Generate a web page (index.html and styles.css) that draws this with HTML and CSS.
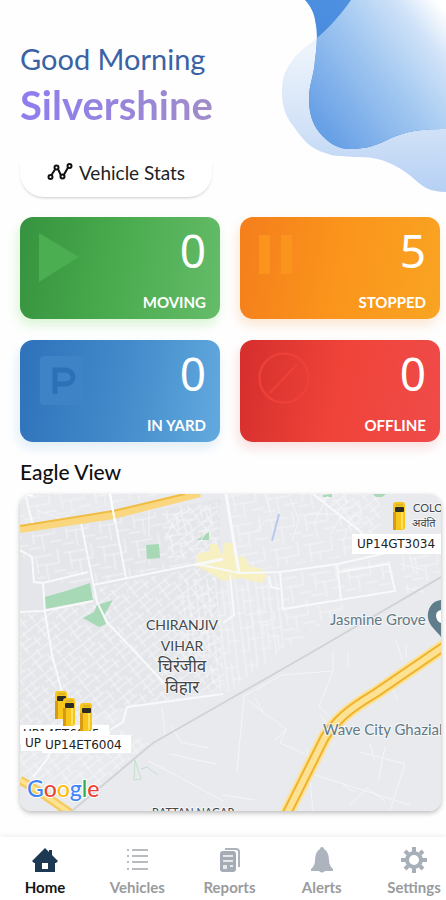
FILE: index.html
```html
<!DOCTYPE html>
<html lang="en">
<head>
<meta charset="utf-8">
<meta name="viewport" content="width=device-width, initial-scale=1">
<title>Fleet Home</title>
<link rel="stylesheet" href="styles.css">
</head>
<body>
<div class="app">
  <header class="hero">
    <svg class="hero-art" viewBox="0 0 164 194" aria-hidden="true">
      <defs>
        <linearGradient id="deep" x1="0" y1="1" x2="1" y2="0"><stop offset="0" stop-color="#3f86dd"/><stop offset="1" stop-color="#5795e2"/></linearGradient>
        <linearGradient id="pale" x1="0" y1="0" x2="0" y2="1"><stop offset=".25" stop-color="#edf4fc"/><stop offset=".7" stop-color="#cfe0f7"/><stop offset="1" stop-color="#b5d0f4"/></linearGradient>
        <linearGradient id="mix" gradientUnits="userSpaceOnUse" x1="38" y1="125" x2="172" y2="22"><stop offset="0" stop-color="#68a0e6"/><stop offset=".5" stop-color="#a4c9f1"/><stop offset=".8" stop-color="#cfe2f8"/><stop offset="1" stop-color="#fff"/></linearGradient>
        <clipPath id="palePath"><path d="M69 0C59 14 49 26 35 38C27 45 19 49 13 57C4 68-1 76-1 91C-1 106 3 116 12 127C21 140 29 149 43 153C53 157 62 156 73 157C87 157 97 158 107 163C117 167 124 172 131 178C141 187 148 192 164 192V0Z"/></clipPath>
      </defs>
      <path fill="url(#pale)" d="M69 0C59 14 49 26 35 38C27 45 19 49 13 57C4 68 0 76 0 91C0 106 3 116 12 127C21 140 29 149 43 153C53 157 62 156 73 157C87 157 97 158 107 163C117 167 124 172 131 178C141 187 148 192 164 192V0Z"/>
      <path fill="url(#deep)" d="M23 0C29 7 32 13 33 20C36 34 35 46 33 60C32 76 27 84 27 99C27 112 30 123 37 132C46 143 56 149 68 149C81 149 89 147 101 142C121 132 134 129 164 129V0Z"/>
      <path fill="url(#mix)" clip-path="url(#palePath)" d="M23 0C29 7 32 13 33 20C36 34 35 46 33 60C32 76 27 84 27 99C27 112 30 123 37 132C46 143 56 149 68 149C81 149 89 147 101 142C121 132 134 129 164 129V0Z"/>
    </svg>
    <p class="greeting">Good Morning</p>
    <h1 class="name">Silvershine</h1>
  </header>

  <main class="content">
    <button class="pill" type="button">
      <svg class="pill-icon" viewBox="0 0 26 18" aria-hidden="true"><g fill="none" stroke="#111" stroke-width="2"><path d="M4.500 12L8 6.500M11 6L14 12.500M16.500 12.500L21 4.500"/><circle cx="3.500" cy="14" r="2"/><circle cx="9.500" cy="4.500" r="2"/><circle cx="15.500" cy="13.500" r="2"/><circle cx="22.500" cy="3" r="2"/></g></svg>
      Vehicle Stats
    </button>

    <section class="stats" aria-label="Vehicle Stats">
      <a class="card moving" href="#moving">
        <svg class="card-icon" viewBox="0 0 52 52" aria-hidden="true"><path fill="#4bae50" d="M1 1L41 25L1 50Z"/></svg>
        <span class="count">0</span><span class="label">MOVING</span>
      </a>
      <a class="card stopped" href="#stopped">
        <svg class="card-icon" viewBox="0 0 52 52" aria-hidden="true"><path fill="#fa941d" d="M1 3H12V42H1ZM23 3H34V42H23Z"/></svg>
        <span class="count">5</span><span class="label">STOPPED</span>
      </a>
      <a class="card yard" href="#yard">
        <svg class="card-icon" viewBox="0 0 52 52" aria-hidden="true"><rect x="2" y="1" width="43" height="49" rx="4" fill="#3d83c6"/><path fill="none" stroke="#2d70b6" stroke-width="5" d="M17 39V15H26C38 15 38 29 26 29H17"/></svg>
        <span class="count">0</span><span class="label">IN YARD</span>
      </a>
      <a class="card offline" href="#offline">
        <svg class="card-icon" viewBox="0 0 52 52" aria-hidden="true"><g fill="none" stroke="#ec4039" stroke-width="2.500"><circle cx="26" cy="23" r="24.500"/><path d="M12 38L39 9"/></g></svg>
        <span class="count">0</span><span class="label">OFFLINE</span>
      </a>
    </section>

    <h2 class="section-title">Eagle View</h2>
    <section class="map-card" aria-label="Eagle View">
      <svg class="map" viewBox="0 0 421 317" preserveAspectRatio="xMidYMid slice" role="img" aria-label="Map of vehicle positions">
        <defs>
          <pattern id="blocks" width="34" height="30" patternUnits="userSpaceOnUse" patternTransform="rotate(-9)"><path d="M0 5H22M6 5V22M6 14H28M15 14V30M28 0V14M22 22H34M0 26H12" class="lane"/></pattern>
          <pattern id="tight" width="24" height="22" patternUnits="userSpaceOnUse" patternTransform="rotate(-38)"><path d="M0 3H24M0 10H17M3 16H24M5 3V22M13 0V10M19 10V22" class="lane"/></pattern>
          <pattern id="columns" width="20" height="38" patternUnits="userSpaceOnUse" patternTransform="rotate(-7)"><path d="M3 0V38M9 3V30M15 0V38M3 8H15M9 20H20M0 31H9" class="lane"/></pattern>
          <g id="truck"><rect width="12" height="28" rx="3" fill="#f6c61d"/><path fill="#d99a13" d="M0 10H3V28H0Z"/><path fill="#ffe061" d="M8 10H10V27H8Z"/><rect x="2" y="5" width="9" height="5" rx="1" fill="#292b24"/><path fill="#ddb32a" d="M3 2H10V4H3Z"/></g>
        </defs>
        <rect width="421" height="317" fill="#e8eaed"/>
        <path fill="#e4e6ea" d="M0 40L200 5V195L100 215L0 235Z"/>
        <path fill="url(#blocks)" d="M0 0H150L0 28ZM0 42L200 6V65L75 90L20 88L0 58ZM208 0H345L360 58L220 78ZM263 80L370 62L375 97L264 114ZM380 60L421 50V85L385 100ZM222 118L330 110L260 160Z"/>
        <path fill="url(#tight)" d="M75 94L195 70L205 195L105 213L90 235H0V120L24 119ZM140 20L198 8V62L150 68ZM0 258H80L48 305L0 280ZM100 235L133 249L70 300L52 290ZM293 0L360 0V50Z"/>
        <path fill="url(#columns)" d="M160 85L260 80L264 155L205 200L160 160Z"/>
        <g fill="#a7d9b7"><path d="M25 103L46 97L70 89L73 106L25 115ZM63 124L74 118L77 111L93 106L83 123L86 130L79 133ZM126 51L139 50L140 64L127 65ZM177 46L189 38V46Z"/><path d="M303 1L312 0V3H303ZM353 0H366L362 3H356Z"/></g>
        <path fill="#f6f0c2" d="M177 60L190 57V50H197L203 61V49H214L217 64L225 62L229 72L240 74L247 82L242 89L220 84L203 87L190 79L177 72Z"/>
        <g fill="none" stroke="#f8f9fa" stroke-width="2">
          <path d="M0 56L12 63L14 88L23 89L25 118L32 161L42 198M5 0L13 31M61 29L77 108L87 128L145 190M23 89L68 78M0 118L23 117L73 107M106 84L90 0M73 91L177 70L219 79L260 78L318 70L375 57M260 78L263 115L375 97L369 70L319 78M317 70L321 106M293 0L341 38L348 53M210 81L214 121L203 129M203 200L107 213L103 228L90 236M42 228L28 264L13 283M249 82L251 93L260 95"/>
          <path stroke-width="3" d="M206 0L219 79M175 71L203 65"/>
        </g>
        <g class="lane">
          <path d="M313 156V177L299 212L309 222M313 177L262 181L224 202L217 278M235 204L244 219L266 235L255 246M244 219L228 206M266 235L260 249L285 260M287 254L293 317M295 281L390 311M340 258L385 270L370 316M350 250L355 267M365 253L358 288M300 221L309 232M128 267L150 278L203 307M150 260L196 270M151 232L161 248L188 254M203 301L235 306M330 311L347 294L365 307M328 172V158M376 146L382 165M386 151V164M367 187L378 205M323 291L335 298M142 213L145 241"/>
          <path d="M129 8V43M160 11L167 42M145 46L154 26L171 15M183 12L194 35M175 55L191 31M18 17L43 25L56 16M245 0L251 21L235 38M270 5L279 26L272 47M287 20H321M308 2L293 31M326 12L311 40M334 18L323 47M380 70L404 76M389 57L394 79M385 94L404 98"/>
        </g>
        <path d="M259 20L252 47" stroke="#b8c8ef" stroke-width="2"/>
        <path d="M421 83L287 161L203 209L133 249L52 317" fill="none" stroke="#d1d3d7" stroke-width="2"/>
        <path d="M115 266L121 285L114 286ZM121 275L127 273L138 281" fill="none" stroke="#c4dfcf"/>
        <g fill="none">
          <path d="M0 35L93 21L180-1" stroke="#fad77e" stroke-width="8"/><path d="M0 32L93 17L165 0" stroke="#efbd45" stroke-width="2"/>
          <path d="M429 149L356 199Q329 215 318 227Q306 240 303 247L266 321" stroke="#fde293" stroke-width="14"/><path d="M429 149L356 199Q329 215 318 227Q306 240 303 247L266 321" stroke="#efb32f" stroke-width="10"/><path d="M429 149L356 199Q329 215 318 227Q306 240 303 247L266 321" stroke="#fde293" stroke-width="6"/>
          <path d="M0 286L20 298L50 319" stroke="#f4cc62" stroke-width="9"/><path d="M0 286L20 298L50 319" stroke="#fde293" stroke-width="4"/>
          <path d="M13 2L5 0M90 0L95 28" stroke="#fff" stroke-width="2"/>
        </g>
        <path fill="#607d8b" d="M421 106C411 107 407 116 408 124C409 132 417 137 421 143Z"/><path fill="#fff" d="M421 116Q416 117 416 122Q417 128 421 129Z"/>
        <g class="place">
          <text x="162" y="136" text-anchor="middle">CHIRANJIV</text><text x="162" y="157" text-anchor="middle">VIHAR</text>
          <text x="162" y="178" text-anchor="middle" class="hindi">चिरंजीव</text><text x="162" y="199" text-anchor="middle" class="hindi">विहार</text>
          <text x="393" y="18" class="small">COLO</text><text x="392" y="33" class="small">अवंति</text>
          <text x="132" y="322" class="small">RATTAN NAGAR</text>
        </g>
        <g class="poi"><text x="310" y="131">Jasmine Grove</text><text x="303" y="241">Wave City Ghazial</text></g>
        <use href="#truck" x="373" y="8"/>
        <g class="plate">
          <rect x="332" y="40" width="89" height="20"/><text x="337" y="54">UP14GT3034</text>
          <rect x="0" y="231" width="89" height="19"/><text x="3" y="244">UP14ET6005</text>
          <rect x="1" y="237" width="89" height="20"/><text x="5" y="253">UP</text>
          <rect x="22" y="241" width="89" height="18"/><text x="25" y="255">UP14ET6004</text>
        </g>
        <use href="#truck" x="35" y="197"/><use href="#truck" x="43" y="204"/><use href="#truck" x="60" y="209"/>
        <text x="7" y="303" class="google"><tspan fill="#4285f4">G</tspan><tspan fill="#ea4335">o</tspan><tspan fill="#fbbc05">o</tspan><tspan fill="#4285f4">g</tspan><tspan fill="#34a853">l</tspan><tspan fill="#ea4335">e</tspan></text>
      </svg>
    </section>
  </main>

  <nav class="tabs" aria-label="Main">
    <a class="tab active" href="#home" aria-current="page">
      <svg viewBox="0 0 26 26" aria-hidden="true"><path fill="#1d3853" d="M13 1L17 5V3H20V8L26 14L24 16H23V25H3V16H2L0 14Z"/><path fill="#fff" d="M10 16H16V22H10Z"/></svg>Home</a>
    <a class="tab" href="#vehicles">
      <svg viewBox="0 0 26 26" aria-hidden="true"><path fill="none" stroke="#b8bcc1" stroke-width="2" d="M3 3H5M8 3H24M3 9H5M8 9H24M3 15H5M8 15H24M3 22H5M8 22H24"/></svg>Vehicles</a>
    <a class="tab" href="#reports">
      <svg viewBox="0 0 26 26" aria-hidden="true"><path fill="none" stroke="#adb3bb" stroke-width="2" d="M8 2H19Q22 2 22 5V20"/><rect x="3" y="4" width="16" height="21" rx="3" fill="#a5acb5"/><path fill="#e6e9ec" d="M6 8H16V10H6ZM6 13H16V15H6ZM6 18H10V22H6ZM13 18H16V20H13Z"/></svg>Reports</a>
    <a class="tab" href="#alerts">
      <svg viewBox="0 0 26 26" aria-hidden="true"><path fill="#aeb4bd" d="M13 0Q15 0 15 2Q20 5 20 13Q20 19 24 22V24H16Q13 27 10 24H2V22Q6 19 6 13Q6 5 11 2Q11 0 13 0Z"/></svg>Alerts</a>
    <a class="tab" href="#settings">
      <svg viewBox="0 0 26 26" aria-hidden="true"><g stroke="#a7afb9" stroke-width="4" fill="none"><circle cx="13" cy="13" r="7"/><path d="M13 0V5M13 21V26M0 13H5M21 13H26M4 4L7 7M19 19L22 22M22 4L19 7M7 19L4 22"/></g></svg>Settings</a>
  </nav>
</div>
</body>
</html>
```
FILE: styles.css
```css
* { box-sizing: border-box; }

body {
  margin: 0;
  background: #fefefe;
  color: #111;
  font-family: Lato, "Noto Sans", sans-serif;
}

a { color: inherit; text-decoration: none; }

.app {
  min-height: 100vh;
  display: flex;
  flex-direction: column;
  overflow: hidden;
}

.hero {
  position: relative;
  padding: 39px 20px 0;
}

.hero-art {
  position: absolute;
  top: 0;
  right: 0;
  width: 164px;
  height: 194px;
}

.greeting {
  margin: 0;
  font-size: 29px;
  line-height: 40px;
  color: #3a62a5;
}

.name {
  margin: 0;
  width: fit-content;
  font-size: 40px;
  line-height: 52px;
  font-weight: 700;
  background: linear-gradient(90deg, #8d7df0, #a18cc8);
  background-clip: text;
  -webkit-background-clip: text;
  color: transparent;
}

.content {
  flex: 1;
  padding: 29px 6px 24px 20px;
}

.pill {
  display: flex;
  align-items: flex-start;
  justify-content: center;
  gap: 6px;
  width: 192px;
  height: 37px;
  padding: 0;
  border: 0;
  border-radius: 0 0 24px 24px;
  background: #fff;
  box-shadow: 0 2px 3px -1px #ccc;
  font: 400 19px/26px Lato, sans-serif;
  color: #222;
}

.pill-icon { width: 26px; height: 18px; margin-top: 3px; }

.stats {
  display: grid;
  grid-template-columns: 1fr 1fr;
  gap: 21px 20px;
  margin-top: 20px;
}

.card {
  display: grid;
  grid-template-columns: 52px 1fr;
  grid-template-rows: 60px 20px;
  align-content: start;
  height: 102px;
  padding: 15px 14px 0 18px;
  border-radius: 13px;
  color: #fff;
  text-align: right;
}

.card-icon { width: 52px; height: 52px; overflow: visible; }
.count { font-family: "Noto Sans", sans-serif; font-size: 46px; line-height: 36px; font-weight: 400; }
.label { grid-column: 1 / -1; font-size: 15px; line-height: 20px; font-weight: 700; }

.moving { background: linear-gradient(100deg, #36923f, #48aa4c 45%, #65bc69); box-shadow: -2px 6px 12px #d9f5d5; }
.stopped { background: linear-gradient(100deg, #f47e1c, #fb951b 50%, #f9a423); box-shadow: -2px 6px 12px #fce6d3; }
.yard { background: linear-gradient(100deg, #2e72ba, #428aca 50%, #62aade); box-shadow: -2px 6px 12px #dfedf7; }
.offline { background: linear-gradient(100deg, #d42e2d, #f04439 50%, #ef4b4a); box-shadow: -2px 6px 12px #f9dede; }

.section-title {
  margin: 16px 0 8px;
  font-size: 21px;
  line-height: 28px;
  font-weight: 500;
  color: #111;
}

.map-card {
  margin-right: -1px;
  border-radius: 12px;
  overflow: hidden;
  box-shadow: 0 2px 5px #bbb;
}

.map { display: block; width: 100%; aspect-ratio: 421 / 317; }
.lane { fill: none; stroke: #f4f5f7; stroke-width: 1; }

.place { font: 400 14px Lato, "Noto Sans", sans-serif; fill: #43474b; stroke: #f5f6f7; stroke-width: 2px; paint-order: stroke; }
.place .small { font-size: 11px; }
.place .hindi { font-size: 17px; }
.poi { font: 400 15px Lato, sans-serif; fill: #627984; stroke: #f5f6f7; stroke-width: 2px; paint-order: stroke; }
.plate { font: 400 12px "DejaVu Sans", sans-serif; fill: #222; }
.plate rect { fill: #fff; }
.google { font: 500 23px Lato, sans-serif; stroke: #fff; stroke-width: 2px; paint-order: stroke; }

.tabs {
  display: flex;
  justify-content: space-between;
  padding: 10px 2px 3px 15px;
  background: #fff;
  box-shadow: 0 0 6px #e9e9e9;
}

.tab {
  display: flex;
  flex-direction: column;
  align-items: center;
  gap: 4px;
  width: 60px;
  font-size: 15px;
  line-height: 20px;
  font-weight: 700;
  color: #999b9e;
}

.tab svg { width: 26px; height: 26px; }
.active { color: #151515; }
```
